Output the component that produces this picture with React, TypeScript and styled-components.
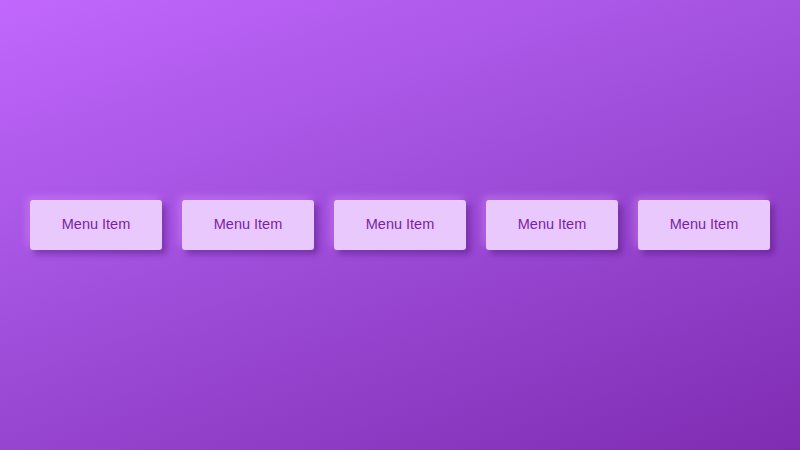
import styled, { createGlobalStyle } from 'styled-components';

const GlobalStyle = createGlobalStyle`
	html, body, #root {
		margin: 0;
		height: 100%;
	}
	body {
		font-family: "Liberation Sans", Arial, sans-serif;
	}
`;

const Page = styled.div`
	height: 100vh;
	display: flex;
	align-items: center;
	padding: 0 30px;
	box-sizing: border-box;
	background: linear-gradient(160deg, #c167fd 0%, #a04fdc 45%, #7f2cb2 100%);
`;

const Menu = styled.nav`
	flex: 1;
	display: grid;
	grid-template-columns: repeat(5, 1fr);
	gap: 20px;
`;

const MenuButton = styled.button`
	height: 50px;
	padding: 0 0 3px;
	border: none;
	border-radius: 3px;
	background: #e9c8fe;
	color: #7b1fa2;
	font-family: "Liberation Sans", Arial, sans-serif;
	font-size: 14.5px;
	cursor: pointer;
	box-shadow:
		4px 4px 6px rgba(70, 10, 110, 0.45),
		-3px -3px 8px rgba(225, 150, 255, 0.45);
`;

const items = ['Menu Item', 'Menu Item', 'Menu Item', 'Menu Item', 'Menu Item'];

const App = () => {
	return (
		<>
			<GlobalStyle />
			<Page>
				<Menu>
					{items.map((label, i) => (
						<MenuButton key={i}>{label}</MenuButton>
					))}
				</Menu>
			</Page>
		</>
	);
};

export default App;
